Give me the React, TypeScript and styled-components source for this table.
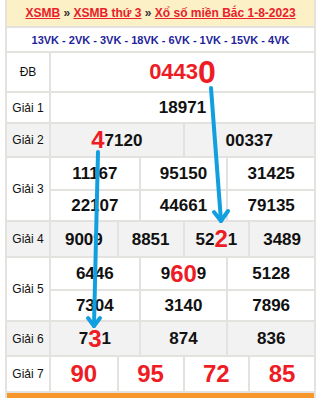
import React from 'react';
import { styled, createGlobalStyle } from 'styled-components';

const GlobalStyle = createGlobalStyle`
  html, body {
    margin: 0;
    padding: 0;
    background: #fff;
    font-family: "Liberation Sans", Arial, sans-serif;
  }
`;

const Page = styled.div`
  position: relative;
  width: 322px;
  height: 398px;
  overflow: hidden;
`;

const Board = styled.div`
  margin-left: 5px;
  width: 307px;
  border-left: 2px solid #e4e2df;
  border-right: 2px solid #e4e2df;
`;

const Header = styled.div`
  height: 26px;
  background: #fcf0c6;
  border-bottom: 2px solid #e4e2df;
  display: flex;
  align-items: center;
  justify-content: center;
  font-size: 12px;
  font-weight: bold;
  color: #333;
  white-space: pre;
`;

const Crumb = styled.a`
  color: #e8202a;
  text-decoration: underline;
`;

const VkRow = styled.div`
  height: 23px;
  border-bottom: 2px solid #e4e2df;
  display: flex;
  align-items: center;
  justify-content: center;
  font-size: 11px;
  font-weight: bold;
  color: #1f1f9c;
`;

const Row = styled.div<{ $h: number; $gray?: boolean }>`
  display: grid;
  grid-template-columns: 44px 1fr;
  height: ${({ $h }) => $h}px;
  border-bottom: 2px solid #e4e2df;
  background: ${({ $gray }) => ($gray ? '#f2f2f2' : '#fff')};
`;

const Label = styled.div`
  display: flex;
  align-items: center;
  justify-content: center;
  border-right: 2px solid #e4e2df;
  font-size: 12px;
  color: #111;
`;

const Cells = styled.div<{ $cols: number; $rows?: number }>`
  display: grid;
  grid-template-columns: repeat(${({ $cols }) => $cols}, 1fr);
  grid-template-rows: repeat(${({ $rows }) => $rows ?? 1}, 1fr);
`;

const Cell = styled.div<{ $size?: number; $red?: boolean; $left?: boolean; $top?: boolean }>`
  display: flex;
  align-items: center;
  justify-content: center;
  font-weight: bold;
  font-size: ${({ $size }) => $size ?? 17}px;
  color: ${({ $red }) => ($red ? '#ee1c25' : '#111')};
  border-left: ${({ $left }) => ($left ? '2px solid #e4e2df' : 'none')};
  border-top: ${({ $top }) => ($top ? '2px solid #e4e2df' : 'none')};
  line-height: 1;
`;

const Hi = styled.span<{ $size: number }>`
  color: #ee1c25;
  font-size: ${({ $size }) => $size}px;
`;

const Footer = styled.div`
  height: 6px;
  background: #f7962a;
`;

const Arrows = styled.svg`
  position: absolute;
  left: 0;
  top: 0;
  pointer-events: none;
`;

type Prize = { label: string; h: number; gray?: boolean; cols: number; rows?: number; items: React.ReactNode[]; size?: number; red?: boolean };

const prizes: Prize[] = [
  {
    label: 'ĐB', h: 38, cols: 1,
    items: [<><Hi $size={22}>0443</Hi><Hi $size={32}>0</Hi></>],
  },
  { label: 'Giải 1', h: 29, cols: 1, items: ['18971'] },
  { label: 'Giải 2', h: 32, gray: true, cols: 2, items: [<><Hi $size={24}>4</Hi>7120</>, '00337'] },
  { label: 'Giải 3', h: 62, cols: 3, rows: 2, items: ['11167', '95150', '31425', '22107', '44661', '79135'] },
  { label: 'Giải 4', h: 34, gray: true, cols: 4, items: ['9009', '8851', <>52<Hi $size={24}>2</Hi>1</>, '3489'] },
  { label: 'Giải 5', h: 62, cols: 3, rows: 2, items: ['6446', <>9<Hi $size={24}>60</Hi>9</>, '5128', '7304', '3140', '7896'] },
  { label: 'Giải 6', h: 33, gray: true, cols: 3, items: [<>7<Hi $size={24}>3</Hi>1</>, '874', '836'] },
  { label: 'Giải 7', h: 34, cols: 4, items: ['90', '95', '72', '85'], size: 24, red: true },
];

const App = () => (
  <Page>
    <GlobalStyle />
    <Board>
      <Header>
        <Crumb>XSMB</Crumb>{' » '}<Crumb>XSMB thứ 3</Crumb>{' » '}<Crumb>Xổ số miền Bắc 1-8-2023</Crumb>
      </Header>
      <VkRow>13VK - 2VK - 3VK - 18VK - 6VK - 1VK - 15VK - 4VK</VkRow>
      {prizes.map((p) => (
        <Row key={p.label} $h={p.h} $gray={p.gray}>
          <Label>{p.label}</Label>
          <Cells $cols={p.cols} $rows={p.rows}>
            {p.items.map((it, i) => (
              <Cell
                key={i}
                $size={p.size}
                $red={p.red}
                $left={i % p.cols !== 0}
                $top={i >= p.cols}
              >
                {it}
              </Cell>
            ))}
          </Cells>
        </Row>
      ))}
      <Footer />
    </Board>
    <Arrows width="322" height="398" viewBox="0 0 322 398">
      <g stroke="#129fdf" strokeWidth="4" strokeLinecap="round" strokeLinejoin="round" fill="none">
        <line x1="211" y1="88" x2="221" y2="221" />
        <polyline points="214,212 221,221 228,211" />
        <line x1="98" y1="152" x2="94" y2="326" />
        <polyline points="88,318 94,326 100,318" />
      </g>
    </Arrows>
  </Page>
);

export default App;
